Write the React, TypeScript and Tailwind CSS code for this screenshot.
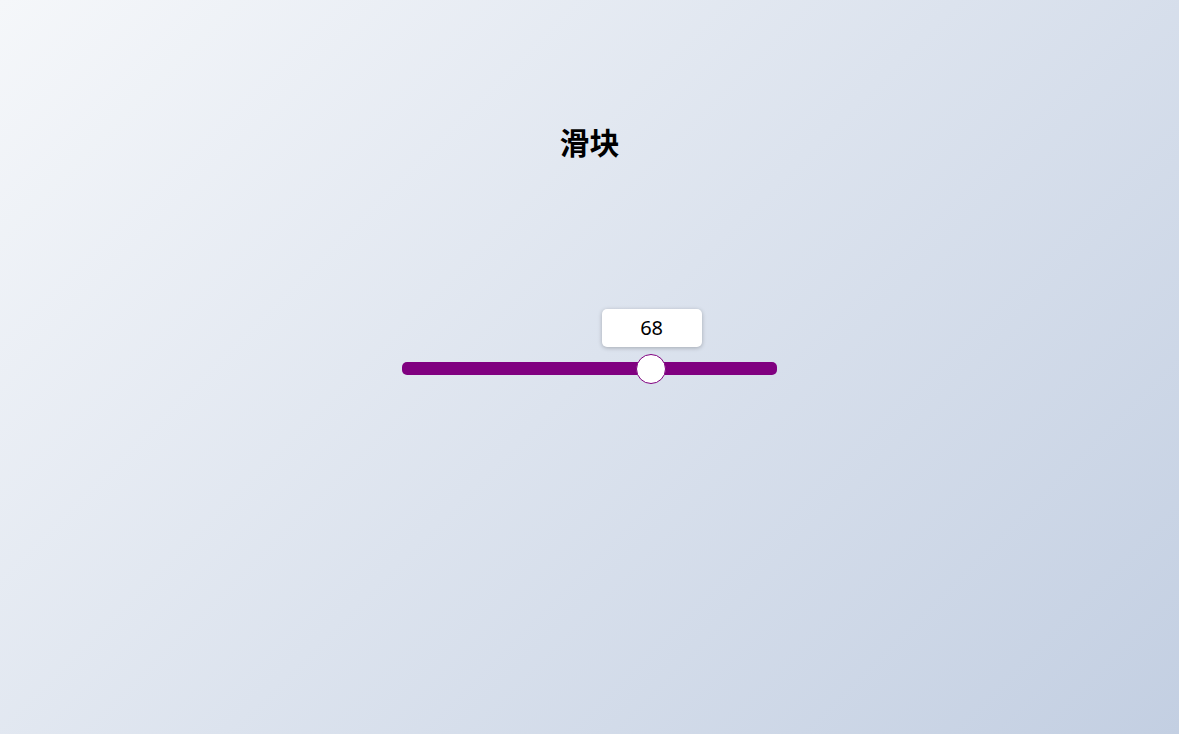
import { useState } from "react";

const THUMB = 30;
const TRACK_W = 375;

export default function App() {
  const [value, setValue] = useState(68);

  // thumb left edge, same maths as a native range input
  const thumbLeft = (value / 100) * (TRACK_W - THUMB);
  const center = thumbLeft + THUMB / 2;

  return (
    <div
      className="w-full h-[734px] flex flex-col items-center bg-[linear-gradient(135deg,#f5f7fa_0%,#c3cfe2_100%)]"
      style={{ fontFamily: '"Noto Sans", "Noto Sans CJK SC", sans-serif' }}
    >
      {/* Title */}
      <h1 className="mt-[121px] text-[30px] leading-[40px] font-bold text-black [font-family:'Noto_Sans_CJK_SC',sans-serif]">
        滑块
      </h1>

      {/* Slider */}
      <div className="mt-[201px] relative w-[375px] h-[13px] rounded-[5px] bg-[#800080]">
        {/* Value bubble */}
        <div
          className="absolute top-[-53px] w-[100px] h-[38px] rounded-[5px] bg-white shadow-[0_1px_4px_rgba(0,0,0,0.25)] flex items-center justify-center text-[20px] text-black"
          style={{ left: center - 50 }}
        >
          {value}
        </div>

        {/* Thumb */}
        <div
          className="absolute top-[-8px] w-[30px] h-[30px] rounded-full bg-white border border-[#800080]"
          style={{ left: thumbLeft - 1 }}
        />

        <input
          type="range"
          min={0}
          max={100}
          value={value}
          onChange={(e) => setValue(Number(e.target.value))}
          className="absolute inset-x-0 top-[-8px] h-[30px] w-full opacity-0 cursor-pointer"
        />
      </div>
    </div>
  );
}
